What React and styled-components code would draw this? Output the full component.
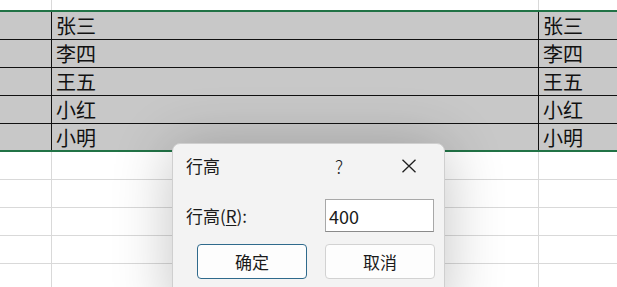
import styled, { createGlobalStyle } from 'styled-components';

const GlobalStyle = createGlobalStyle`
  html, body {
    margin: 0;
    padding: 0;
    background: #ffffff;
  }
  body {
    font-family: 'Noto Sans CJK SC', 'Noto Sans', sans-serif;
    color: #1a1a1a;
  }
`;

const names = ['张三', '李四', '王五', '小红', '小明'];

const App = () => {
  return (
    <>
      <GlobalStyle />
      <Sheet>
        <TopRow>
          <Cell $w={52} />
          <Cell $w={487} />
          <Cell />
        </TopRow>
        <Selection>
          {names.map((name, i) => (
            <SelRow key={name} $last={i === names.length - 1}>
              <SelCell $w={52} />
              <SelCell $w={487}>{name}</SelCell>
              <SelCell>{name}</SelCell>
            </SelRow>
          ))}
        </Selection>
        {[0, 1, 2, 3, 4].map((n) => (
          <BlankRow key={n}>
            <Cell $w={52} />
            <Cell $w={487} />
            <Cell />
          </BlankRow>
        ))}
        <Dialog>
          <TitleBar>
            <Title>行高</Title>
            <TitleBtn>?</TitleBtn>
            <TitleBtn>
              <svg width="16" height="14" viewBox="0 0 16 14">
                <path d="M1.5 0.8 L14.5 13.2 M14.5 0.8 L1.5 13.2" stroke="#1f1f1f" strokeWidth="1.3" fill="none" />
              </svg>
            </TitleBtn>
          </TitleBar>
          <FieldRow>
            <Label>
              行高(<u>R</u>):
            </Label>
            <Input defaultValue="400" />
          </FieldRow>
          <ButtonRow>
            <Button $primary>确定</Button>
            <Button>取消</Button>
          </ButtonRow>
        </Dialog>
      </Sheet>
    </>
  );
};

const Sheet = styled.div`
  position: relative;
  width: 617px;
  height: 287px;
  overflow: hidden;
  background: #ffffff;
`;

const TopRow = styled.div`
  display: flex;
  height: 10px;
`;

const BlankRow = styled.div`
  display: flex;
  height: 28px;
  box-sizing: border-box;
  border-bottom: 1px solid #d9d9d9;
`;

const Cell = styled.div`
  box-sizing: border-box;
  flex: ${(p) => (p.$w ? `0 0 ${p.$w}px` : '1')};
  border-right: ${(p) => (p.$w ? '1px solid #d9d9d9' : 'none')};
`;

const Selection = styled.div`
  border-top: 2px solid #217346;
  border-bottom: 2px solid #217346;
  background: #c8c8c8;
`;

const SelRow = styled.div`
  display: flex;
  height: ${(p) => (p.$last ? '26px' : '28px')};
  box-sizing: border-box;
  border-bottom: ${(p) => (p.$last ? 'none' : '1px solid #111111')};
`;

const SelCell = styled.div`
  box-sizing: border-box;
  flex: ${(p) => (p.$w ? `0 0 ${p.$w}px` : '1')};
  border-right: ${(p) => (p.$w ? '1px solid #111111' : 'none')};
  display: flex;
  align-items: center;
  padding-left: 4px;
  padding-top: 1px;
  font-size: 20px;
  line-height: 1;
  color: #111111;
  white-space: nowrap;
`;

const Dialog = styled.div`
  position: absolute;
  left: 172px;
  top: 143px;
  width: 273px;
  height: 170px;
  box-sizing: border-box;
  background: #f3f3f3;
  border: 1px solid #cfcfcf;
  border-radius: 8px;
  box-shadow: 0 4px 60px rgba(0, 0, 0, 0.24);
`;

const TitleBar = styled.div`
  display: flex;
  align-items: center;
  height: 43px;
  padding-left: 13px;
`;

const Title = styled.div`
  flex: 1;
  font-size: 17px;
`;

const TitleBtn = styled.div`
  width: 70px;
  height: 43px;
  display: flex;
  align-items: center;
  justify-content: center;
  font-size: 18px;
  font-weight: 300;
  color: #1f1f1f;
`;

const FieldRow = styled.div`
  display: flex;
  align-items: center;
  justify-content: space-between;
  margin-top: 12px;
  padding: 0 10px 0 13px;
`;

const Label = styled.div`
  font-size: 17px;
  u {
    text-underline-offset: 2px;
  }
`;

const Input = styled.input`
  width: 109px;
  height: 33px;
  box-sizing: border-box;
  border: 1px solid #a8a8a8;
  border-bottom-color: #8a8a8a;
  background: #ffffff;
  padding: 0 3px;
  font-family: inherit;
  font-size: 18px;
  color: #1a1a1a;
  outline: none;
`;

const ButtonRow = styled.div`
  display: flex;
  gap: 18px;
  margin-top: 12px;
  padding-left: 24px;
`;

const Button = styled.button`
  width: 110px;
  height: 35px;
  box-sizing: border-box;
  border-radius: 4px;
  border: 1px solid ${(p) => (p.$primary ? '#2f6a8c' : '#d2d2d2')};
  background: #fdfdfd;
  font-family: inherit;
  font-size: 17px;
  color: #1a1a1a;
  padding: 0;
`;

export default App;
